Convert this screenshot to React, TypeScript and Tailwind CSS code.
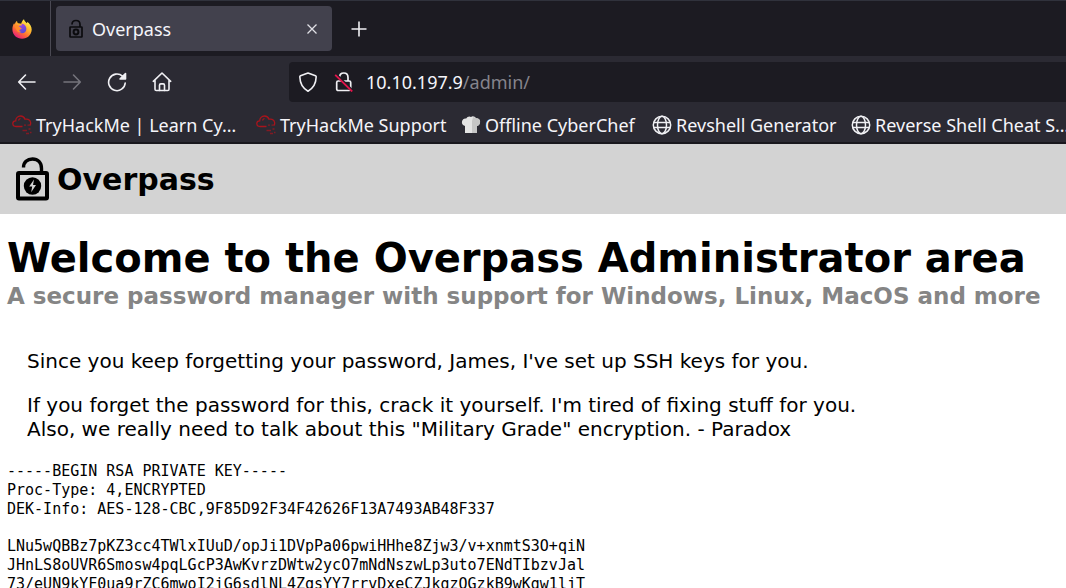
import type { ReactNode } from "react";

const BOOKMARKS = [
  { label: "TryHackMe | Learn Cy…", icon: <CloudIcon />, width: "w-[228px]" },
  { label: "TryHackMe Support", icon: <CloudIcon />, width: "w-[189px]" },
  { label: "Offline CyberChef", icon: <ChefIcon />, width: "w-[175px]" },
  { label: "Revshell Generator", icon: <GlobeIcon />, width: "w-[183px]" },
  { label: "Reverse Shell Cheat S…", icon: <GlobeIcon />, width: "w-[228px]" },
];

const KEY_TEXT = `-----BEGIN RSA PRIVATE KEY-----
Proc-Type: 4,ENCRYPTED
DEK-Info: AES-128-CBC,9F85D92F34F42626F13A7493AB48F337

LNu5wQBBz7pKZ3cc4TWlxIUuD/opJi1DVpPa06pwiHHhe8Zjw3/v+xnmtS3O+qiN
JHnLS8oUVR6Smosw4pqLGcP3AwKvrzDWtw2ycO7mNdNszwLp3uto7ENdTIbzvJal
73/eUN9kYF0ua9rZC6mwoI2iG6sdlNL4ZqsYY7rrvDxeCZJkgzQGzkB9wKgw1ljT`;

function FirefoxIcon() {
  return (
    <svg viewBox="0 0 20 20" className="h-5 w-5">
      <defs>
        <linearGradient id="fox" x1="0.85" y1="0.1" x2="0.25" y2="1">
          <stop offset="0" stopColor="#fff44f" />
          <stop offset="0.35" stopColor="#ffb52e" />
          <stop offset="0.65" stopColor="#ff6a35" />
          <stop offset="1" stopColor="#e31587" />
        </linearGradient>
        <linearGradient id="globe" x1="0" y1="0" x2="0.5" y2="1">
          <stop offset="0" stopColor="#b04be0" />
          <stop offset="1" stopColor="#5b4bd6" />
        </linearGradient>
      </defs>
      <path
        d="M12 .3c.3 1.8 1.7 2.7 2.7 4 .5-.3.6-1 .5-1.6 2.6 1.8 4.6 4.9 4.5 8.1-.2 5.1-4.3 9-9.6 9S.5 15.8.4 10.800C.3 8.200 1.100 5.500 2.300 4c0 .6.1 1 .4 1.500C3.100 3.900 4 2.500 5 1.700c0 1 .4 1.900 1 2.500 1.200-.1 2.300.1 3.200.6C9.600 2.900 10.600 1.300 12 .3z"
        fill="url(#fox)"
      />
      <path
        d="M6.300 7.300c1-.6 2.100-.9 3.200-.6-.1-.8.2-1.400.6-1.900 2.500.4 4.200 2.400 4.300 4.900.1 2.600-1.800 4.500-4.300 4.500s-4.400-1.700-4.400-4c1 .6 2.300.6 3.200-.1l.9-.9c-.9-.1-1.600-.5-2-1.200z"
        fill="url(#globe)"
      />
      <path
        d="M2.400 7.500c1.500-1.500 3.500-1.400 5-.4-.8.5-1 1.300-.7 1.900h2.700c-.2 1-1.300 1.200-2 1.800-.5 1.200.8 2.300 2.200 2.300-2.200.9-4.600-.1-5.200-2.300z"
        fill="#ff8a2b"
      />
    </svg>
  );
}

function OverpassIcon({ className }: { className: string }) {
  return (
    <svg viewBox="0 0 33 44" className={className} fill="none">
      <path
        d="M7.500 10.500C7.500 5.200 11.200 2 16.500 2s9 3.500 9 9.500V15"
        stroke="#000"
        strokeWidth="3.400"
      />
      <rect x="2" y="16" width="29" height="25.500" rx="1" stroke="#000" strokeWidth="4" />
      <circle cx="16.500" cy="29" r="8.700" fill="#000" />
      <path d="M18 22.500l-4.800 7h3l-1 5.800 4.800-7.200h-3z" fill="#d3d3d3" />
    </svg>
  );
}

function TabLockIcon() {
  return (
    <svg viewBox="0 0 16 20" className="h-5 w-4" fill="none" stroke="#0b0b0e" strokeWidth="1.700">
      <path d="M4 5.500C4 2.800 5.700 1.500 8 1.500s4 1.500 4 4V8" />
      <rect x="2" y="8" width="12" height="10" rx=".5" />
      <circle cx="8" cy="13" r="2.400" strokeWidth="2" />
    </svg>
  );
}

function CloudIcon() {
  return (
    <svg
      viewBox="0 0 20 20"
      className="h-5 w-5 shrink-0"
      fill="none"
      stroke="#a8141c"
      strokeWidth="1.300"
    >
      <path d="M10.500 11.500H4C2 11.500.8 10.200.8 8.600S2 5.900 3.700 5.900C3.700 3 5.800 1 8.500 1c2.200 0 3.800 1.200 4.500 3.200 2.700-.5 5 .8 5.600 3.100.3 1.200 0 2.300-.6 3.100" />
      <path d="M6.500 5.500c.4-1 1-1.700 2-2" />
      <path d="M12 10.200h2M15.500 10.200h3M10.500 15.500h4.500M16.500 14h2M14 18.500h3M18 17.500h1.500" strokeOpacity=".7" />
    </svg>
  );
}

function ChefIcon() {
  return (
    <svg viewBox="0 0 20 20" className="h-5 w-5 shrink-0">
      <path
        d="M4 18V11C1.500 10.500.5 8.500 1 6.500 1.400 4 3.500 3 5.200 3.500 6.200 1.500 8.500.8 10 1.900c1.700-1.100 4-.5 4.900 1.400 2.300-.4 4.200 1.200 4.200 3.400 0 2.100-1.100 3.700-3.100 4.300v7z"
        fill="#e4e4e4"
      />
      <path
        d="M11 18V6l1-3.800c1.300-.2 2.300.2 2.900 1.100 2.300-.4 4.200 1.200 4.200 3.400 0 2.100-1.100 3.700-3.100 4.300v7z"
        fill="#c6c6c6"
      />
    </svg>
  );
}

function GlobeIcon() {
  return (
    <svg
      viewBox="0 0 20 20"
      className="h-5 w-5 shrink-0"
      fill="none"
      stroke="#f0f0f4"
      strokeWidth="1.500"
    >
      <circle cx="10" cy="10" r="8.700" />
      <ellipse cx="10" cy="10" rx="4.500" ry="8.700" />
      <path d="M1.500 7.500h17M1.500 12.500h17" />
    </svg>
  );
}

function ToolButton({
  label,
  disabled,
  children,
}: {
  label: string;
  disabled?: boolean;
  children: ReactNode;
}) {
  return (
    <button
      type="button"
      aria-label={label}
      disabled={disabled}
      className="grid h-9 w-9 place-items-center rounded text-[#f0f0f4] disabled:text-[#75747c]"
    >
      <svg
        viewBox="0 0 20 20"
        className="h-5 w-5"
        fill="none"
        stroke="currentColor"
        strokeWidth="1.600"
        strokeLinecap="round"
        strokeLinejoin="round"
      >
        {children}
      </svg>
    </button>
  );
}

function TabBar() {
  return (
    <div className="flex h-14 items-center border-t border-[#30323c] bg-[#1c1b22]">
      <div className="mr-[5px] flex h-full w-[51px] items-center border-r border-[#4a4953] pl-3">
        <FirefoxIcon />
      </div>
      <div className="flex h-[45px] w-[276px] items-center rounded bg-[#42414d] px-3">
        <TabLockIcon />
        <span className="ml-2 flex-1 text-lg">Overpass</span>
        <button type="button" aria-label="Close tab" className="grid h-4 w-4 place-items-center">
          <svg viewBox="0 0 12 12" className="h-3 w-3" stroke="#e0e0e6" strokeWidth="1.300">
            <path d="M1.500 1.500l9 9M10.500 1.500l-9 9" />
          </svg>
        </button>
      </div>
      <button type="button" aria-label="New tab" className="ml-[15px] grid h-6 w-6 place-items-center">
        <svg viewBox="0 0 16 16" className="h-4 w-4" stroke="#f0f0f4" strokeWidth="1.600">
          <path d="M8 .5v15M.5 8h15" />
        </svg>
      </button>
    </div>
  );
}

function NavBar() {
  return (
    <div className="flex h-[51px] items-center pl-[9px]">
      <div className="flex w-[280px] gap-[9px]">
        <ToolButton label="Back">
          <path d="M18 10H2M8.500 3L1.700 10l6.800 7" />
        </ToolButton>
        <ToolButton label="Forward" disabled>
          <path d="M2 10h16M11.500 3l6.800 7-6.800 7" />
        </ToolButton>
        <ToolButton label="Reload">
          <path d="M18.200 11A8.300 8.300 0 1 1 15.500 4.200" />
          <path d="M18.500 1.500v5.500h-5.500z" fill="currentColor" />
        </ToolButton>
        <ToolButton label="Home">
          <path d="M1.300 9.300L10 1l8.700 8.300M3 8.500v8.700c0 .8.500 1.300 1.300 1.300h11.400c.8 0 1.300-.5 1.300-1.300V8.500" />
          <path d="M7.500 18.500v-5.300c0-.8.500-1.300 1.300-1.300h2.400c.8 0 1.300.5 1.300 1.300v5.300" />
        </ToolButton>
      </div>
      <div className="flex h-10 min-w-0 flex-1 items-center rounded-l bg-[#1c1b22] pl-[9px]">
        <svg viewBox="0 0 20 20" className="h-5 w-5" fill="none" stroke="#f0f0f4" strokeWidth="1.600">
          <path
            d="M10 1l7.500 2.800c.5.200.7.500.7 1C18 11 15 16.500 10 19.200 5 16.500 2 11 1.800 4.800c0-.5.200-.8.700-1z"
            strokeLinejoin="round"
          />
        </svg>
        <svg viewBox="0 0 20 20" className="ml-4 h-5 w-5" fill="none" stroke="#f0f0f4" strokeWidth="1.700">
          <path d="M5.500 5.500C5.500 2.500 7.200 1 9.800 1S14 2.700 14 5.500V9" />
          <rect x="2.700" y="9" width="14" height="9.500" rx="1.500" />
          <path d="M2.500 3l16 16" stroke="#1c1b22" strokeWidth="3" />
          <path d="M1.200 2.800l17 16.700" stroke="#e2154b" strokeWidth="1.800" />
        </svg>
        <a href="#address" className="ml-3 text-lg">
          10.10.197.9<span className="text-[#85848c]">/admin/</span>
        </a>
      </div>
    </div>
  );
}

export default function App() {
  return (
    <div className="h-screen overflow-hidden bg-white font-['DejaVu_Sans',sans-serif] text-black">
      <header className="bg-[#2b2a33] font-['Noto_Sans',sans-serif] text-[#f5f5fa]">
        <TabBar />
        <NavBar />
        <nav className="flex h-[37px] gap-4 overflow-hidden border-b-2 border-[#18171d] pl-3">
          {BOOKMARKS.map((item) => (
            <a
              key={item.label}
              href="#bookmark"
              className={`flex shrink-0 items-center gap-1 whitespace-nowrap text-lg ${item.width}`}
            >
              {item.icon}
              {item.label}
            </a>
          ))}
        </nav>
      </header>

      <nav className="flex h-[70px] items-center bg-[#d3d3d3] pl-4">
        <a href="#home" className="flex items-center gap-2">
          <OverpassIcon className="h-11 w-[33px]" />
          <span className="text-[30px] font-bold">Overpass</span>
        </a>
      </nav>

      <main className="px-[7px] pt-5">
        <h1 className="whitespace-nowrap text-[40px] font-bold leading-[48px]">
          Welcome to the Overpass Administrator area
        </h1>
        <h2 className="whitespace-nowrap text-[23px] font-bold leading-7 text-[#858585]">
          A secure password manager with support for Windows, Linux, MacOS and more
        </h2>
        <div className="mt-[39px] space-y-5 px-5 text-xl leading-6">
          <p>Since you keep forgetting your password, James, I've set up SSH keys for you.</p>
          <p>
            If you forget the password for this, crack it yourself. I'm tired of fixing stuff for you.
            <br />
            Also, we really need to talk about this "Military Grade" encryption. - Paradox
          </p>
        </div>
        <pre className="mt-[21px] font-['DejaVu_Sans_Mono',monospace] text-[15px] leading-tight">
          {KEY_TEXT}
        </pre>
      </main>
    </div>
  );
}
